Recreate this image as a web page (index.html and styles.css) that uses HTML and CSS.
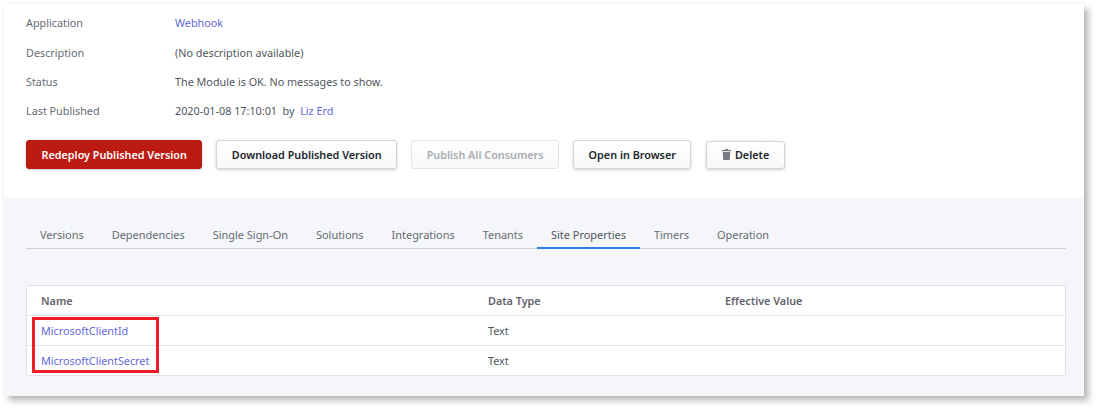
FILE: index.html
```html
<!DOCTYPE html>
<html lang="en">
<head>
    <meta charset="UTF-8">
    <meta name="viewport" content="width=device-width, initial-scale=1.0">
    <title>Webhook</title>
    <link rel="stylesheet" href="styles.css">
</head>
<body>

    <div class="card">
        <div class="summary">
            <div class="info-row">
                <span class="info-label">Application</span>
                <a class="link" href="#">Webhook</a>
            </div>
            <div class="info-row">
                <span class="info-label">Description</span>
                <span>(No description available)</span>
            </div>
            <div class="info-row">
                <span class="info-label">Status</span>
                <span>The Module is OK. No messages to show.</span>
            </div>
            <div class="info-row">
                <span class="info-label">Last Published</span>
                <span>2020-01-08 17:10:01&nbsp; by&nbsp; <a class="link" href="#">Liz Erd</a></span>
            </div>

            <div class="actions">
                <button class="btn btn-primary">Redeploy Published Version</button>
                <button class="btn">Download Published Version</button>
                <button class="btn btn-disabled" disabled>Publish All Consumers</button>
                <button class="btn">Open in Browser</button>
                <button class="btn btn-delete">
                    <svg class="trash" viewBox="0 0 10 12" width="9" height="11">
                        <path d="M3.6 0h2.8l.5 1H10v1.4H0V1h3.1z"/>
                        <path d="M.8 3.2h8.4L8.6 12H1.4z"/>
                    </svg>
                    Delete
                </button>
            </div>
        </div>

        <div class="details">
            <div class="tabs">
                <a class="tab" href="#">Versions</a>
                <a class="tab" href="#">Dependencies</a>
                <a class="tab" href="#">Single Sign-On</a>
                <a class="tab" href="#">Solutions</a>
                <a class="tab" href="#">Integrations</a>
                <a class="tab" href="#">Tenants</a>
                <a class="tab tab-active" href="#">Site Properties</a>
                <a class="tab" href="#">Timers</a>
                <a class="tab" href="#">Operation</a>
            </div>

            <div class="table">
                <div class="table-row table-head">
                    <span>Name</span>
                    <span>Data Type</span>
                    <span>Effective Value</span>
                </div>
                <div class="table-row">
                    <a class="link" href="#">MicrosoftClientId</a>
                    <span>Text</span>
                    <span></span>
                </div>
                <div class="table-row">
                    <a class="link" href="#">MicrosoftClientSecret</a>
                    <span>Text</span>
                    <span></span>
                </div>
                <div class="callout"></div>
            </div>
        </div>
    </div>

</body>
</html>
```

FILE: styles.css
```css
body {
    margin: 0;
    height: 411px;
    background: #fff;
    font-family: "Noto Sans", sans-serif;
    font-size: 10.8px;
    color: #50555d;
}
.card {
    width: 1080px;
    height: 392px;
    margin: 0 0 0 4px;
    position: relative;
    top: 4px;
    background: #fff;
    box-shadow: 0 0 4px rgba(0,0,0,0.08), 5px 5px 6px rgba(0,0,0,0.25);
    display: flex;
    flex-direction: column;
}
.link {
    color: #6368dc;
    text-decoration: none;
}
.summary {
    height: 194px;
    box-sizing: border-box;
    padding: 4px 22px 0;
}
.info-row {
    display: flex;
    height: 29.4px;
    align-items: center;
}
.info-label {
    width: 149px;
    color: #666b73;
}
.actions {
    display: flex;
    gap: 14px;
    margin-top: 14px;
    align-items: flex-end;
}
.btn {
    height: 29px;
    box-sizing: border-box;
    padding: 0 14.5px;
    border: 1px solid #d4d6da;
    border-radius: 3px;
    background: linear-gradient(#fff, #f6f7f8);
    box-shadow: 0 1px 3px rgba(0,0,0,0.2);
    font-family: inherit;
    font-size: 10.8px;
    font-weight: 600;
    color: #22262c;
}
.btn-primary {
    background: #bd1a12;
    border-color: #b3170f;
    color: #fff;
}
.btn-disabled {
    color: #a9acb1;
    border-color: #e2e3e6;
    box-shadow: none;
}
.btn-delete {
    display: flex;
    align-items: center;
    gap: 4px;
    height: 28px;
    margin-left: 1px;
}
.trash {
    fill: #77797e;
}
.details {
    flex: 1;
    background: #f5f6f9;
    padding: 0 18px 0 22px;
}
.tabs {
    display: flex;
    height: 50px;
    margin-bottom: 36px;
    align-items: flex-end;
    border-bottom: 1px solid #cfd1d6;
    font-size: 10.95px;
}
.tab {
    padding: 0 14px 5px;
    height: 24px;
    box-sizing: border-box;
    line-height: 19px;
    color: #666b73;
    text-decoration: none;
    margin-bottom: -1px;
}
.tab-active {
    color: #50555d;
    border-bottom: 2px solid #2f7bec;
}
.table {
    position: relative;
    background: #fff;
    border: 1px solid #dfe1e5;
    border-radius: 3px;
}
.table-row {
    display: grid;
    grid-template-columns: 447px 237px 1fr;
    height: 30px;
    box-sizing: border-box;
    padding-left: 14px;
    align-items: center;
    border-top: 1px solid #dfe1e5;
}
.table-head {
    height: 29px;
    border-top: none;
    font-weight: 600;
    color: #5f636b;
}
/* red marker drawn over the two names */
.callout {
    position: absolute;
    left: 5px;
    top: 31px;
    width: 127px;
    height: 56px;
    box-sizing: border-box;
    border: 3px solid #ee1c25;
    pointer-events: none;
}
```
